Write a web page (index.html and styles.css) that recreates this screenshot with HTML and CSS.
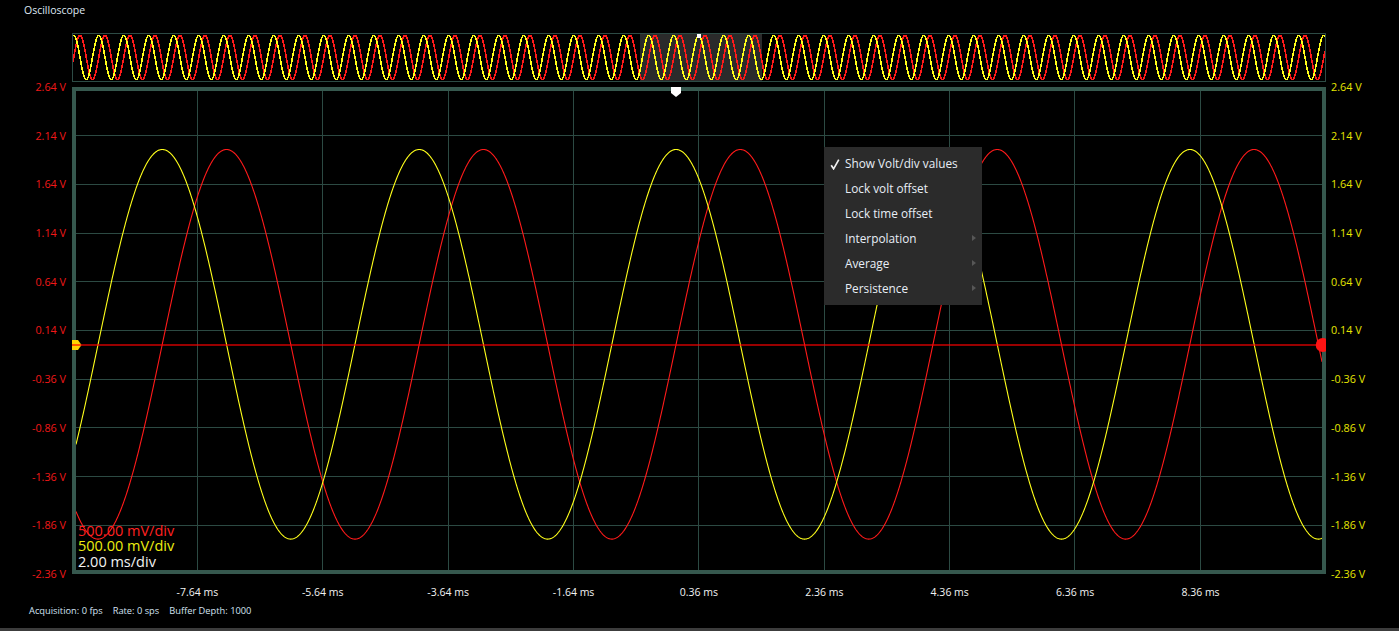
FILE: index.html
```html
<!DOCTYPE html>
<html>
<head>
<meta charset="utf-8">
<title>Oscilloscope</title>
<link rel="stylesheet" href="styles.css">
</head>
<body>
<div class="app">
  <div class="title">Oscilloscope</div>

  <div class="overview">
    <svg id="ov" width="1252" height="47" viewBox="0 0 1252 47">
      <rect class="ov-window" x="567" y="0" width="122" height="47"></rect>
      <g id="ov-waves"></g>
      <rect class="ov-pos" x="624" y="0" width="4" height="4"></rect>
    </svg>
  </div>

  <div class="main">
    <div class="vaxis left">
      <span>2.64 V</span><span>2.14 V</span><span>1.64 V</span><span>1.14 V</span><span>0.64 V</span><span>0.14 V</span><span>-0.36 V</span><span>-0.86 V</span><span>-1.36 V</span><span>-1.86 V</span><span>-2.36 V</span>
    </div>

    <div class="plot">
      <svg id="scope" width="1254" height="487" viewBox="0 0 1254 487">
        <defs>
          <clipPath id="inner"><rect x="4" y="4" width="1246" height="479"></rect></clipPath>
        </defs>
        <g id="grid" class="grid"></g>
        <g id="waves" clip-path="url(#inner)"></g>
        <rect class="frame" x="2" y="2" width="1250" height="483"></rect>
        <polygon class="mk-yellow" points="0,253 6,253 9.5,258 6,263 0,263"></polygon>
        <line class="zero-line" x1="0" y1="257.5" x2="1250" y2="257.5"></line>
        <circle class="mk-red" cx="1250.7" cy="258" r="7"></circle>
        <polygon class="mk-time" points="599,0 609,0 609,6 604,10 599,6"></polygon>
      </svg>

      <div class="scale-info">
        <div class="ch1">500.00 mV/div</div>
        <div class="ch2">500.00 mV/div</div>
        <div class="tb">2.00 ms/div</div>
      </div>

      <div class="menu">
        <div class="menu-item checked">
          <svg class="check" width="10" height="11" viewBox="0 0 10 11"><path d="M1.2 6.2 L3.6 9.8 L8.8 0.6"></path></svg>
          Show Volt/div values
        </div>
        <div class="menu-item">Lock volt offset</div>
        <div class="menu-item">Lock time offset</div>
        <div class="menu-item sub">Interpolation</div>
        <div class="menu-item sub">Average</div>
        <div class="menu-item sub">Persistence</div>
      </div>
    </div>

    <div class="vaxis right">
      <span>2.64 V</span><span>2.14 V</span><span>1.64 V</span><span>1.14 V</span><span>0.64 V</span><span>0.14 V</span><span>-0.36 V</span><span>-0.86 V</span><span>-1.36 V</span><span>-1.86 V</span><span>-2.36 V</span>
    </div>
  </div>

  <div class="haxis">
    <span>-7.64 ms</span><span>-5.64 ms</span><span>-3.64 ms</span><span>-1.64 ms</span><span>0.36 ms</span><span>2.36 ms</span><span>4.36 ms</span><span>6.36 ms</span><span>8.36 ms</span>
  </div>

  <div class="status">
    <span>Acquisition: 0 fps</span>
    <span>Rate: 0 sps</span>
    <span>Buffer Depth: 1000</span>
  </div>

  <div class="bottom-bar"></div>
</div>
<script src="script.js"></script>
</body>
</html>
```

FILE: styles.css
```css
html, body {
  margin: 0;
  padding: 0;
  background: #000;
}

body {
  font-family: "Open Sans", "Noto Sans", sans-serif;
}

.app {
  width: 1399px;
  height: 631px;
  display: flex;
  flex-direction: column;
  overflow: hidden;
}

.title {
  height: 20px;
  line-height: 20px;
  padding-left: 24px;
  font-size: 10.5px;
  color: #dfe7f2;
}

.overview {
  margin: 13px 0 0 72px;
  width: 1252px;
  height: 47px;
  border: 1px solid #2d4b45;
}

.overview svg,
.plot svg#scope {
  display: block;
}

.ov-window { fill: #2b2b2b; }
.ov-pos { fill: #ffffff; }

.main {
  display: flex;
  margin-top: 5px;
  height: 487px;
}

.vaxis {
  display: flex;
  flex-direction: column;
  justify-content: space-between;
  height: 501px;
  margin-top: -7px;
  font-size: 10.8px;
  line-height: 14px;
  white-space: nowrap;
}

.vaxis.left {
  width: 72px;
  box-sizing: border-box;
  padding-right: 6px;
  align-items: flex-end;
  color: #f01818;
}

.vaxis.right {
  padding-left: 5px;
  color: #e6e600;
}

.plot {
  position: relative;
  width: 1254px;
  height: 487px;
  flex: none;
}

.grid line {
  stroke: #2c4a43;
  stroke-width: 1;
  shape-rendering: crispEdges;
}

.frame {
  fill: none;
  stroke: #36584e;
  stroke-width: 4;
  shape-rendering: crispEdges;
}

.wave {
  fill: none;
  stroke-width: 1.1;
}
.wave.yellow { stroke: #ffff1a; }
.wave.red { stroke: #ff1a1a; }

.ov-wave {
  fill: none;
  stroke-width: 1.6;
  shape-rendering: crispEdges;
}
.ov-wave.yellow { stroke: #ffff1a; }
.ov-wave.red { stroke: #ff1a1a; }

.zero-line {
  stroke: rgba(255, 0, 0, 0.6);
  stroke-width: 2;
  shape-rendering: crispEdges;
}

.mk-yellow { fill: #ffd400; }
.mk-red { fill: #ff1414; }
.mk-time { fill: #ffffff; }

.scale-info {
  position: absolute;
  left: 6px;
  bottom: 5px;
  font-size: 14.5px;
  line-height: 15.5px;
  white-space: nowrap;
}
.scale-info .ch1 { color: #ff2020; }
.scale-info .ch2 { color: #eeee10; }
.scale-info .tb { color: #f2f2f2; }

.menu {
  position: absolute;
  left: 752px;
  top: 60px;
  width: 158px;
  box-sizing: border-box;
  padding: 4px 0;
  background: #2b2b2b;
}

.menu-item {
  position: relative;
  height: 25px;
  line-height: 25px;
  padding-left: 21px;
  font-size: 11.8px;
  color: #e8eef6;
  white-space: nowrap;
}

.menu-item .check {
  position: absolute;
  left: 6px;
  top: 8px;
}
.menu-item .check path {
  fill: none;
  stroke: #f2f2f2;
  stroke-width: 1.7;
}

.menu-item.sub::after {
  content: "";
  position: absolute;
  right: 6px;
  top: 9px;
  border-style: solid;
  border-width: 3.5px 0 3.5px 4px;
  border-color: transparent transparent transparent #575757;
}

.haxis {
  display: flex;
  padding-left: 134.7px;
  margin-top: 11px;
  font-size: 10.5px;
  line-height: 14px;
  color: #f2f2f2;
}
.haxis span {
  flex: none;
  width: 125.4px;
  text-align: center;
  white-space: nowrap;
}

.status {
  display: flex;
  gap: 10px;
  padding-left: 29px;
  margin-top: 6px;
  font-size: 9.3px;
  line-height: 12px;
  color: #d3e2f2;
  white-space: nowrap;
}

.bottom-bar {
  margin-top: auto;
  height: 3px;
  background: #3c3c3c;
}
```

FILE: script.js
```js
(function () {
  var NS = 'http://www.w3.org/2000/svg';

  function el(name, attrs, parent) {
    var e = document.createElementNS(NS, name);
    for (var k in attrs) e.setAttribute(k, attrs[k]);
    parent.appendChild(e);
    return e;
  }

  function points(x0, x1, step, f) {
    var a = [];
    for (var x = x0; x <= x1 + 1e-6; x += step) {
      a.push(x.toFixed(2) + ',' + f(x).toFixed(2));
    }
    return a.join(' ');
  }

  function cosWave(center, amp, period, peak) {
    return function (x) {
      return center - amp * Math.cos(2 * Math.PI * (x - peak) / period);
    };
  }

  // grid of the main plot
  var grid = document.getElementById('grid');
  for (var i = 1; i < 10; i++) {
    var x = Math.floor(125.35 * i) + 0.5;
    el('line', { x1: x, y1: 0, x2: x, y2: 487 }, grid);
  }
  for (var j = 1; j < 10; j++) {
    var y = Math.floor(48.7 * j) + 0.5;
    el('line', { x1: 0, y1: y, x2: 1254, y2: y }, grid);
  }

  // main waveforms
  var waves = document.getElementById('waves');
  var period = 256.9;
  el('polyline', { 'class': 'wave red', points: points(4, 1250, 0.5, cosWave(257.3, 194.8, period, 154.5)) }, waves);
  el('polyline', { 'class': 'wave yellow', points: points(4, 1250, 0.5, cosWave(257.3, 194.8, period, 90.3)) }, waves);

  // overview waveforms
  var ov = document.getElementById('ov-waves');
  el('polyline', { 'class': 'ov-wave red', points: points(0, 1252, 1, cosWave(23.5, 22.3, 25, 7.0)) }, ov);
  el('polyline', { 'class': 'ov-wave yellow', points: points(0, 1252, 1, cosWave(23.5, 22.3, 25, 0.75)) }, ov);
})();
```
